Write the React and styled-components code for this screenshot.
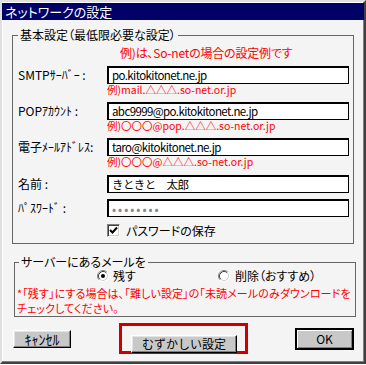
import styled, { createGlobalStyle, css } from 'styled-components';

const GlobalStyle = createGlobalStyle`
  html, body {
    margin: 0;
    padding: 0;
    background: #ffffff;
  }
  body {
    font-family: "Noto Sans CJK JP", "Noto Sans", sans-serif;
    font-feature-settings: "palt";
    color: #000;
  }
`;

// dialog frame
const Window = styled.div`
  box-sizing: border-box;
  width: 366px;
  height: 364px;
  background: #f4f4f4;
  border: 2px solid;
  border-color: #dfdfdf #404040 #404040 #dfdfdf;
  box-shadow: inset -1px -1px #808080, inset 1px 1px #ffffff;
  display: flex;
  flex-direction: column;
  align-items: flex-start;
`;

const TitleBar = styled.div`
  align-self: stretch;
  height: 17px;
  margin-top: 1px;
  padding-left: 3px;
  background: #000066;
  color: #fff;
  font-size: 13px;
  line-height: 17px;
  white-space: nowrap;
`;

const Group = styled.fieldset`
  box-sizing: border-box;
  width: 342px;
  min-width: 0;
  margin: ${p => p.$mt}px 0 0 ${p => p.$ml}px;
  padding: ${p => p.$pad};
  border: 1px solid #666;
`;

const Legend = styled.legend`
  padding: 0 2px;
  margin-left: ${p => p.$ml || 0}px;
  font-size: 12px;
  line-height: ${p => p.$lh || 14}px;
  white-space: nowrap;
`;

const Note = styled.div`
  box-sizing: border-box;
  height: 24px;
  padding: 4px 0 0 102px;
  color: #ff0000;
  font-size: 12px;
  line-height: 14px;
  letter-spacing: -0.2px;
  white-space: nowrap;
`;

const Row = styled.div`
  display: grid;
  grid-template-columns: 89px 242px;
  align-items: center;
  height: 18px;
  margin-top: ${p => p.$mt || 0}px;
`;

const Label = styled.span`
  font-size: 12px;
  line-height: 18px;
  white-space: nowrap;
`;

const Input = styled.input`
  box-sizing: border-box;
  width: 242px;
  height: 18px;
  margin: 0;
  padding: 0 0 0 4px;
  background: #fff;
  border: 1px solid #000;
  box-shadow: inset 1px 1px #000;
  font-family: inherit;
  font-size: ${p => (p.$dots ? '12px' : '11.5px')};
  letter-spacing: ${p => (p.$dots ? '2px' : '-0.6px')};
  color: ${p => (p.$dots ? '#888' : '#000')};
  outline: none;
`;

const Hint = styled.div`
  height: ${p => p.$h || 18}px;
  padding-left: 89px;
  color: #ff0000;
  font-size: 10.5px;
  line-height: 12px;
  white-space: nowrap;
`;

const CheckRow = styled.label`
  display: flex;
  align-items: center;
  gap: 6px;
  height: 13px;
  margin: 7px 0 0 89px;
  font-size: 12px;
  white-space: nowrap;
`;

const CheckBox = styled.span`
  box-sizing: border-box;
  width: 13px;
  height: 13px;
  display: flex;
  align-items: center;
  justify-content: center;
  background: #fff;
  border: 1px solid;
  border-color: #808080 #ffffff #ffffff #808080;
  box-shadow: inset 1px 1px #404040, inset -1px -1px #d4d0c8;
`;

const RadioRow = styled.div`
  display: grid;
  grid-template-columns: 121px auto;
  height: 16px;
  padding-left: 80px;
`;

const RadioItem = styled.label`
  display: flex;
  align-items: center;
  gap: ${p => p.$gap}px;
  font-size: 12px;
  line-height: 16px;
  white-space: nowrap;
`;

const Warning = styled.p`
  margin: 2px 0 0;
  color: #ff0000;
  font-size: 11px;
  line-height: 15px;
  letter-spacing: 0.1px;
  white-space: nowrap;
`;

const ButtonBar = styled.div`
  box-sizing: border-box;
  width: 340px;
  height: 31px;
  margin: 6px 0 0 11px;
  display: flex;
  align-items: center;
  justify-content: space-between;
`;

const Button = styled.button`
  box-sizing: border-box;
  width: ${p => p.$w}px;
  height: 18px;
  margin: 0;
  padding: 0;
  background: #c8c8c8;
  border: 1px solid;
  border-color: #ffffff #000000 #000000 #ffffff;
  box-shadow: inset -1px -1px #808080, inset 1px 1px #e4e4e4;
  font-family: inherit;
  font-size: ${p => p.$fs || 12}px;
  line-height: 16px;
  color: #000;
  ${p => p.$default && css`
    height: 20px;
    outline: 1px solid #000;
    outline-offset: 0;
    border-color: #000;
    box-shadow: inset 1px 1px #fff, inset -1px -1px #808080;
  `}
`;

const Highlight = styled.div`
  box-sizing: border-box;
  width: 129px;
  height: 31px;
  padding: 4px 0 0 9px;
  border: 3px solid #cc0000;
`;

function Radio({ checked }) {
  return (
    <svg width="12" height="12" viewBox="0 0 12 12">
      <circle cx="6" cy="6" r="5" fill="#fff" />
      <path d="M2.11 9.89 A5.5 5.5 0 0 1 9.89 2.11" fill="none" stroke="#808080" />
      <path d="M9.89 2.11 A5.5 5.5 0 0 1 2.11 9.89" fill="none" stroke="#ffffff" />
      <path d="M2.82 9.18 A4.5 4.5 0 0 1 9.18 2.82" fill="none" stroke="#404040" />
      <path d="M9.18 2.82 A4.5 4.5 0 0 1 2.82 9.18" fill="none" stroke="#d4d0c8" />
      {checked && <circle cx="6" cy="6" r="2" fill="#000" />}
    </svg>
  );
}

const fields = [
  { label: 'SMTPｻｰﾊﾞｰ :', value: 'po.kitokitonet.ne.jp', hint: '例)mail.△△△.so-net.or.jp' },
  { label: 'POPｱｶｳﾝﾄ :', value: 'abc9999@po.kitokitonet.ne.jp', hint: '例)〇〇〇@pop.△△△.so-net.or.jp' },
  { label: '電子ﾒｰﾙｱﾄﾞﾚｽ:', value: 'taro@kitokitonet.ne.jp', hint: '例)〇〇〇@△△△.so-net.or.jp', hintH: 19 },
];

export default function App() {
  return (
    <>
      <GlobalStyle />
      <Window>
        <TitleBar>ネットワークの設定</TitleBar>

        <Group $mt={8} $ml={10} $pad="0 4px 6px 5px">
          <Legend>基本設定（最低限必要な設定）</Legend>
          <Note>例)は、So-netの場合の設定例です</Note>
          {fields.map(f => (
            <div key={f.label}>
              <Row>
                <Label>{f.label}</Label>
                <Input readOnly value={f.value} />
              </Row>
              <Hint $h={f.hintH}>{f.hint}</Hint>
            </div>
          ))}
          <Row>
            <Label>名前 :</Label>
            <Input readOnly value="きときと　太郎" />
          </Row>
          <Row $mt={6}>
            <Label>ﾊﾟｽﾜｰﾄﾞ :</Label>
            <Input readOnly $dots value="••••••••" />
          </Row>
          <CheckRow>
            <CheckBox>
              <svg width="9" height="9" viewBox="0 0 9 9">
                <path d="M1 4 L3.5 6.5 L8 1.5" fill="none" stroke="#000" strokeWidth="2" />
              </svg>
            </CheckBox>
            パスワードの保存
          </CheckRow>
        </Group>

        <Group $mt={12} $ml={12} $pad="0 2px 0 2px">
          <Legend $ml={2} $lh={12}>サーバーにあるメールを</Legend>
          <RadioRow>
            <RadioItem $gap={4}>
              <Radio checked />
              残す
            </RadioItem>
            <RadioItem $gap={5}>
              <Radio />
              削除（おすすめ）
            </RadioItem>
          </RadioRow>
          <Warning>
            *「残す」にする場合は、「難しい設定」の「未読メールのみダウンロードを
            <br />
            チェックしてください。
          </Warning>
        </Group>

        <ButtonBar>
          <Button $w={58} $fs={14}>ｷｬﾝｾﾙ</Button>
          <Highlight>
            <Button $w={106}>むずかしい設定</Button>
          </Highlight>
          <Button $w={57} $default>OK</Button>
        </ButtonBar>
      </Window>
    </>
  );
}
